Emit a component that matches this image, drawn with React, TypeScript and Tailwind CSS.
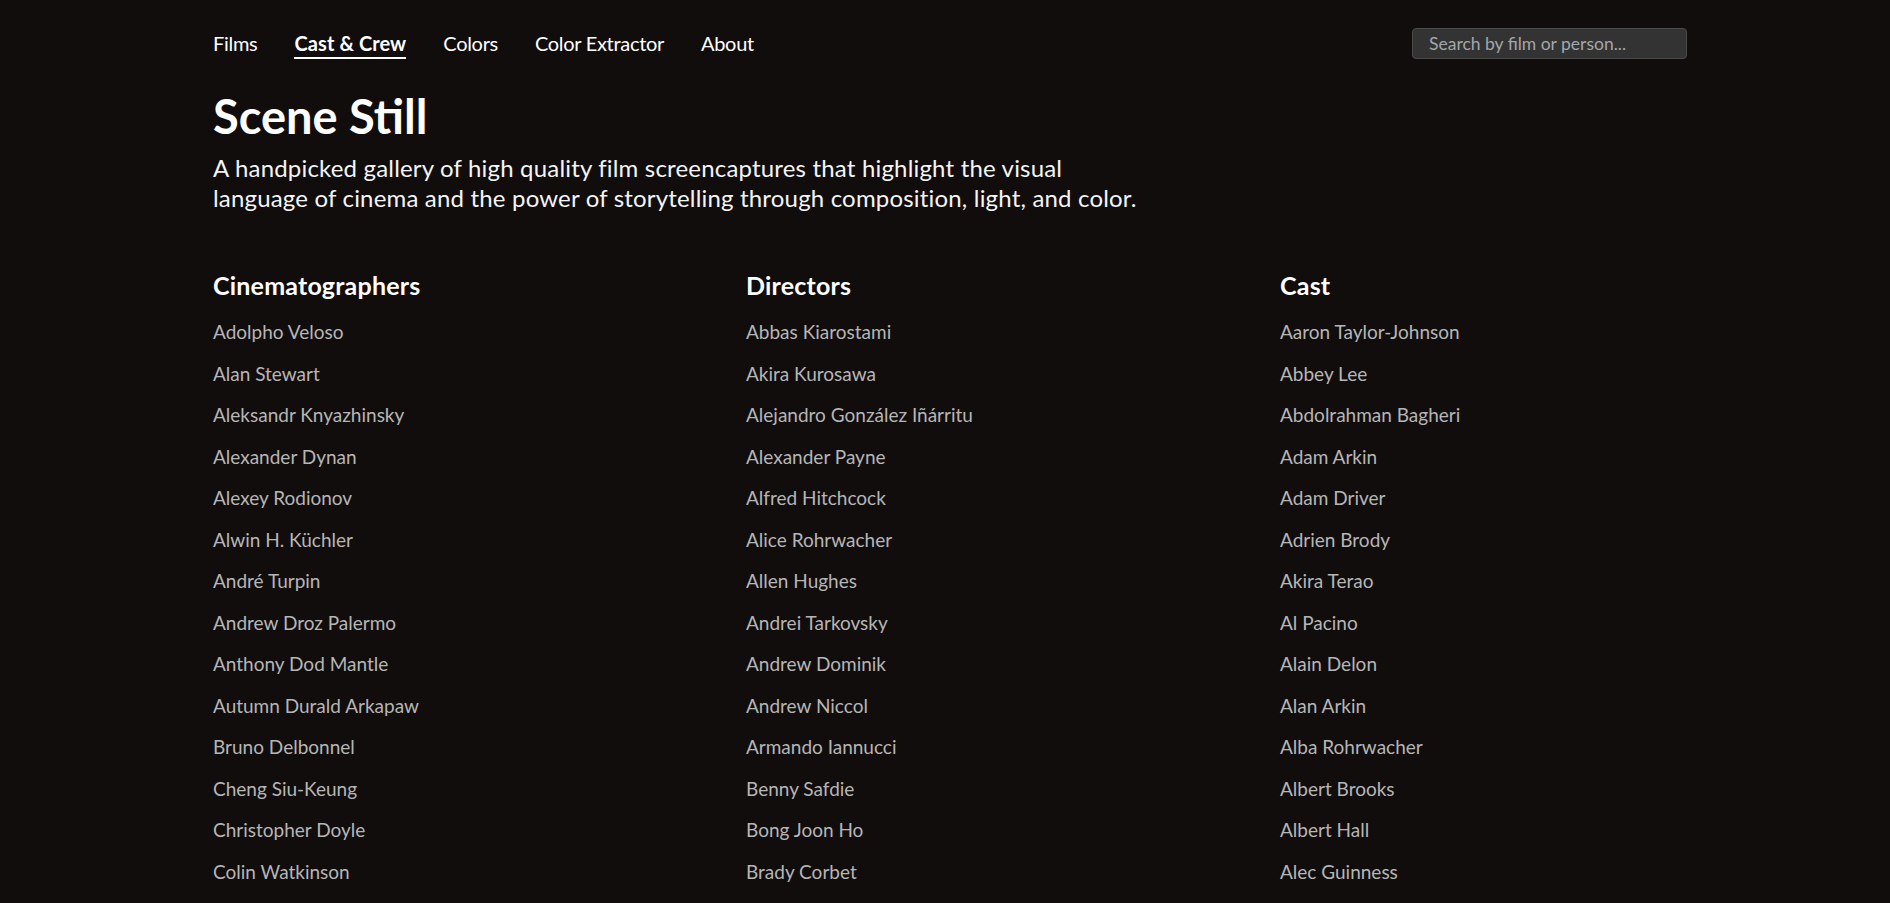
import React from "react";

const navItems = [
  { label: "Films", active: false },
  { label: "Cast & Crew", active: true },
  { label: "Colors", active: false },
  { label: "Color Extractor", active: false },
  { label: "About", active: false },
];

const columns: { title: string; names: string[] }[] = [
  {
    title: "Cinematographers",
    names: [
      "Adolpho Veloso",
      "Alan Stewart",
      "Aleksandr Knyazhinsky",
      "Alexander Dynan",
      "Alexey Rodionov",
      "Alwin H. Küchler",
      "André Turpin",
      "Andrew Droz Palermo",
      "Anthony Dod Mantle",
      "Autumn Durald Arkapaw",
      "Bruno Delbonnel",
      "Cheng Siu-Keung",
      "Christopher Doyle",
      "Colin Watkinson",
      "Darius Khondji",
      "Dick Pope",
    ],
  },
  {
    title: "Directors",
    names: [
      "Abbas Kiarostami",
      "Akira Kurosawa",
      "Alejandro González Iñárritu",
      "Alexander Payne",
      "Alfred Hitchcock",
      "Alice Rohrwacher",
      "Allen Hughes",
      "Andrei Tarkovsky",
      "Andrew Dominik",
      "Andrew Niccol",
      "Armando Iannucci",
      "Benny Safdie",
      "Bong Joon Ho",
      "Brady Corbet",
      "Brian De Palma",
      "Chloé Zhao",
    ],
  },
  {
    title: "Cast",
    names: [
      "Aaron Taylor-Johnson",
      "Abbey Lee",
      "Abdolrahman Bagheri",
      "Adam Arkin",
      "Adam Driver",
      "Adrien Brody",
      "Akira Terao",
      "Al Pacino",
      "Alain Delon",
      "Alan Arkin",
      "Alba Rohrwacher",
      "Albert Brooks",
      "Albert Hall",
      "Alec Guinness",
      "Alicia Vikander",
      "Amy Adams",
    ],
  },
];

export default function App() {
  return (
    <div className="min-h-screen bg-[#110d0d] font-['Lato','Noto_Sans',sans-serif] text-white">
      <div className="pl-[213px] pr-[203px]">
        <header className="flex items-center justify-between pt-[28px]">
          <nav className="flex items-center gap-[37px] text-[20px] leading-[24px]">
            {navItems.map((item) => (
              <a
                key={item.label}
                href="#"
                className={
                  item.active
                    ? "border-b-2 border-white pt-[2px] pb-[2px] font-bold tracking-[0.1px] text-white"
                    : "border-b-2 border-transparent pt-[2px] pb-[2px] tracking-[-0.3px] text-white"
                }
              >
                {item.label}
              </a>
            ))}
          </nav>
          <input
            type="text"
            placeholder="Search by film or person..."
            className="h-[31px] w-[275px] rounded-[4px] border border-[#4a4a4a] bg-[#333333] px-[16px] text-[17.5px] text-white outline-none placeholder:text-[#a3a6aa]"
          />
        </header>

        <section className="mt-[33px]">
          <h1 className="text-[47px] font-bold leading-[48px] text-white">Scene Still</h1>
          <p className="mt-[13px] text-[24px] leading-[30px] tracking-[0.18px] text-[#f4f4f4]">
            A handpicked gallery of high quality film screencaptures that highlight the visual
            <br />
            language of cinema and the power of storytelling through composition, light, and color.
          </p>
        </section>

        <section className="mt-[56px] grid grid-cols-[533px_534px_1fr]">
          {columns.map((col) => (
            <div key={col.title}>
              <h2 className="text-[25px] font-bold leading-[32px] tracking-[0.2px] text-white">
                {col.title}
              </h2>
              <ul className="mt-[17px] flex flex-col gap-[13.5px] text-[19px] leading-[28px] text-[#b6b6b6]">
                {col.names.map((name) => (
                  <li key={name}>
                    <a href="#">{name}</a>
                  </li>
                ))}
              </ul>
            </div>
          ))}
        </section>
      </div>
    </div>
  );
}
